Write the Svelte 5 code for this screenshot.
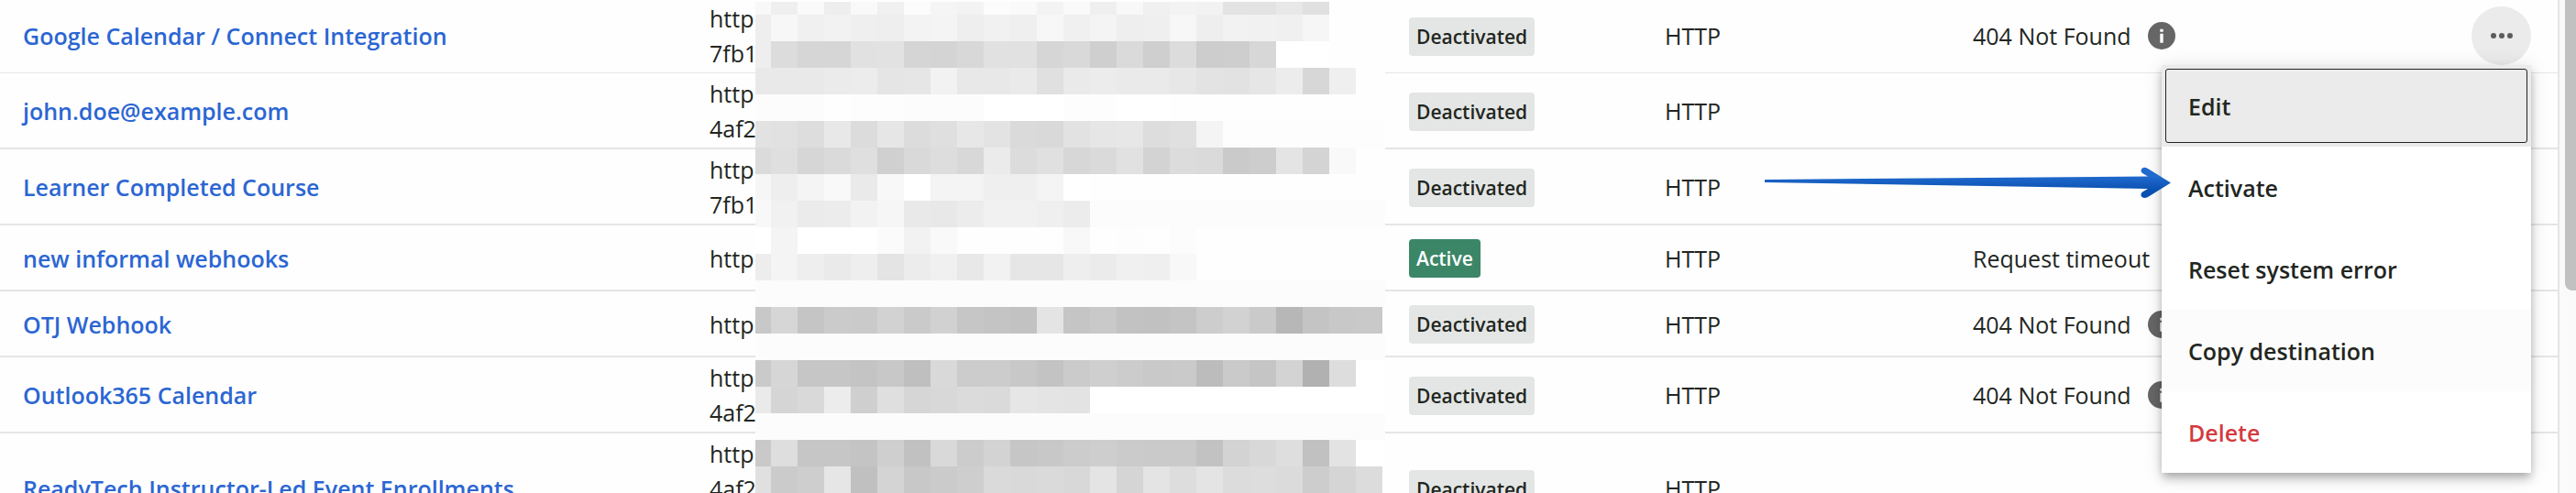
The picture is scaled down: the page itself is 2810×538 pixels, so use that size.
<script lang="ts">
  type Webhook = {
    name: string;
    url: string[];
    active?: boolean;
    error?: string;
    info?: boolean;
    menu?: boolean;
  };

  const webhooks: Webhook[] = [
    { name: 'Google Calendar / Connect Integration', url: ['http', '7fb1'], error: '404 Not Found', info: true, menu: true },
    { name: 'john.doe@example.com', url: ['http', '4af2'] },
    { name: 'Learner Completed Course', url: ['http', '7fb1'] },
    { name: 'new informal webhooks', url: ['http'], active: true, error: 'Request timeout' },
    { name: 'OTJ Webhook', url: ['http'], error: '404 Not Found', info: true },
    { name: 'Outlook365 Calendar', url: ['http', '4af2'], error: '404 Not Found', info: true },
    { name: 'ReadyTech Instructor-Led Event Enrollments', url: ['http', '4af2', ''] }
  ];

  const actions = ['Edit', 'Activate', 'Reset system error', 'Copy destination', 'Delete'];

  // grey level of every tile that hides the destinations
  const mosaic = [
    'f8 ef fa ee f9 f0 fc f5 f3 fc fa f3 fa ef f8 f0 f3 f2 e3 e3 e8 e0 fe fe fe',
    'ee f7 f0 f2 ef ee f3 f4 ee f1 ef f7 f0 f4 ee ef f7 ee f2 f1 f0 f6 fe fe fe',
    'ee dc d6 d6 e1 e2 d5 d4 d8 e1 e1 d6 d9 cf da cf dc cd ce d7 ff ff fe fe fe',
    'e9 e9 e9 eb ec e5 e6 f2 e8 e8 ea e0 ea ec ea ea e7 e3 e2 e6 ec d7 ef fe fe',
    'fc fc fc fe fd fd fc fc fc ff ff ff fd fd ff ff fe fe fe fe fe fe fe fe fe',
    'e2 e1 dd e8 dc e6 dc df e7 e3 da d9 e2 e6 e7 dd e0 f4 fd fd fd fd fd fd fd',
    'db df d6 da df d0 d9 dd d8 eb dc e0 d7 da e1 d3 dc da ca cd e4 d4 f9 fe fe',
    'f6 ee f4 f9 ea f8 ff f4 f4 ef ef f4 ff fe fe fe fe fe fe fe fe fe fe fe fe',
    'f8 f1 eb ec f2 f6 e9 e8 ec f1 f1 ef ec fc fc fc fc fc fc fc fc fc fc fc fc',
    'ff f4 ff ff ff fb f2 f9 fe fe fe fe f8 fe fd fe fc fe fe fe fe fe fe fe fe',
    'ed f4 ee ea ee e4 ec f0 e8 f2 e6 e6 ee eb f0 ef f8 fe fe fe fe fe fe fe fe',
    'fc fc fc fc fc fc fc fc fc fc fc fc fc fc fc fc fc fc fc fc fc fc fc fc fc',
    'c8 d6 c5 cb ca d2 ca d1 c6 c4 c2 e4 c5 c9 c2 c1 c4 cd d2 ca b7 c4 c8 c9 ff',
    'fc fc fc fc fc fc fc fc fc fc fc fc fc fc fc fc fc fc fc fc fc fc fc fc fc',
    'ca d6 c6 c6 c4 c8 bf d9 cc cc c8 c3 cb cf cc c9 ca bc ca c5 d3 b1 dd ff ff',
    'ea d5 d9 ec cf df d6 d8 db da e6 e4 e3 ff ff ff ff ff ff ff ff ff ff ff ff',
    'fc fc fc fc fc fc fc fc fc fc fc fc fc fc fc fc fc fc fc fc fc fc fc fc fc',
    'c9 de c6 c6 c4 cf c1 d9 cc d3 c6 c8 cc ce cb ca ca c2 d3 d8 de c1 e3 ff ff',
    'e0 cb ce e6 c0 d4 c8 cb ce da d9 da d8 e4 d5 e4 dd e4 dc dd db cd d5 dc ff'
  ].map((row) => row.split(' '));
</script>

<div class="page">
  <div class="list">
    <table>
      <colgroup>
        <col class="col-name" />
        <col class="col-url" />
        <col class="col-status" />
        <col class="col-type" />
        <col />
        <col class="col-actions" />
      </colgroup>
      <tbody>
        {#each webhooks as hook}
          <tr>
            <td><a href="#edit">{hook.name}</a></td>
            <td>
              {#each hook.url as line}
                <span class="url-line">{line}</span>
              {/each}
            </td>
            <td>
              <span class="badge" class:active={hook.active}>{hook.active ? 'Active' : 'Deactivated'}</span>
            </td>
            <td>HTTP</td>
            <td>
              {#if hook.error}
                <div class="error">
                  <span>{hook.error}</span>
                  {#if hook.info}
                    <svg class="info" viewBox="0 0 30 30" aria-hidden="true">
                      <circle cx="15" cy="15" r="15" fill="#666" />
                      <path d="M13.3 7.8h3.4v3h-3.4zM13.3 12.7h3.4v10h-3.4z" fill="#fff" />
                    </svg>
                  {/if}
                </div>
              {/if}
            </td>
            <td class="actions">
              {#if hook.menu}
                <div class="dropdown">
                  <button class="more" aria-label="More actions">
                    <svg viewBox="0 0 24 6" aria-hidden="true">
                      <circle cx="3" cy="3" r="3" />
                      <circle cx="12" cy="3" r="3" />
                      <circle cx="21" cy="3" r="3" />
                    </svg>
                  </button>
                  <div class="menu">
                    {#each actions as action, i}
                      <button
                        class="item"
                        class:focused={i === 0}
                        class:hovered={i === 3}
                        class:danger={action === 'Delete'}>{action}</button>
                    {/each}
                    <svg class="arrow" viewBox="0 0 444 36" aria-hidden="true">
                      <defs>
                        <linearGradient id="arrow-fill" x1="0" y1="0" x2="0" y2="1">
                          <stop offset="0.3" stop-color="#2069cd" />
                          <stop offset="0.75" stop-color="#0a50b0" />
                        </linearGradient>
                      </defs>
                      <path
                        d="M0 14 L418 10.500 L412 7 Q409 4 412 1.500 Q414 0 418 2 L443 17.500 L418 33 Q414 35 411.500 33 Q409 30 412 27.500 L418 24 L0 17 Z"
                        fill="url(#arrow-fill)"
                      />
                    </svg>
                  </div>
                </div>
              {/if}
            </td>
          </tr>
        {/each}
      </tbody>
    </table>

    <svg class="mosaic" viewBox="0 0 687 536" shape-rendering="crispEdges" aria-hidden="true">
      {#each mosaic as row, r}
        {#each row as v, c}
          <rect x={c * 29 - 12} y={r * 29 - 15} width="29" height="29" fill="#{v}{v}{v}" />
        {/each}
      {/each}
    </svg>
  </div>
  <div class="scrollbar">
    <div class="thumb"></div>
  </div>
</div>

<style>
  :global(body) {
    background: #fefefe;
  }

  .page {
    display: flex;
    height: 100vh;
    overflow: hidden;
    font-family: 'Open Sans', sans-serif;
    font-size: 25px;
    line-height: 38px;
    color: #222621;
  }

  .list {
    position: relative;
    flex: 1;
    border-right: 2px solid #e5e5e5;
  }

  table {
    width: 100%;
    margin-top: -3px;
    table-layout: fixed;
    border-spacing: 0;
  }

  .col-name {
    width: 749px;
  }

  .col-url {
    width: 763px;
  }

  .col-status {
    width: 279px;
  }

  .col-type {
    width: 336px;
  }

  .col-actions {
    width: 120px;
  }

  td {
    box-sizing: border-box;
    height: 72px;
    padding: 3px 25px 2px;
    border-bottom: 2px solid #e5e5e5;
    vertical-align: middle;
  }

  tr:first-child td {
    padding-top: 4px;
    border-bottom-width: 1px;
  }

  a {
    color: #2b66d3;
    font-weight: 600;
    text-decoration: none;
  }

  .url-line {
    display: block;
    height: 38px;
  }

  .badge {
    display: inline-block;
    padding: 0 8px;
    border-radius: 4px;
    background: #e4e6e5;
    font-size: 21px;
    font-weight: 600;
    line-height: 42px;
    vertical-align: middle;
  }

  .badge.active {
    background: #3b8667;
    color: #fff;
  }

  .error {
    display: flex;
    align-items: center;
    gap: 18px;
  }

  .info {
    width: 30px;
    height: 30px;
  }

  tr:first-child td.actions {
    padding: 4px 29px 2px 0;
  }

  .dropdown {
    position: relative;
    width: 65px;
    margin-left: auto;
  }

  .more {
    display: flex;
    align-items: center;
    justify-content: center;
    width: 65px;
    height: 64px;
    padding: 0;
    border: 0;
    border-radius: 50%;
    background: #ebebeb;
  }

  .more svg {
    width: 24px;
    height: 6px;
    fill: #5c5c5c;
  }

  .menu {
    position: absolute;
    top: 100%;
    right: 0;
    z-index: 2;
    width: 403px;
    background: #fff;
    box-shadow:
      0 4px 8px -2px rgba(0, 0, 0, 0.2),
      0 8px 10px rgba(0, 0, 0, 0.14),
      0 2px 20px rgba(0, 0, 0, 0.12);
  }

  .item {
    display: block;
    width: 100%;
    height: 89px;
    padding: 0 29px;
    border: 0;
    background: none;
    color: inherit;
    font: inherit;
    font-weight: 600;
    text-align: left;
  }

  .item.focused {
    position: relative;
    background: #ebebeb;
  }

  .item.focused::after {
    content: '';
    position: absolute;
    inset: 4px;
    border: 1px solid #222;
    border-radius: 3px;
  }

  .item.hovered {
    background: #fcfcfc;
  }

  .item.danger {
    color: #d43a3f;
  }

  .arrow {
    position: absolute;
    top: 111px;
    right: 392px;
    width: 444px;
    height: 36px;
  }

  .mosaic {
    position: absolute;
    top: 2px;
    left: 824px;
    width: 687px;
    height: 536px;
  }

  .scrollbar {
    width: 18px;
    padding-left: 6px;
    box-sizing: border-box;
    background: #fafafa;
  }

  .thumb {
    height: 59%;
    border-radius: 0 0 0 8px;
    background: #c1c1c1;
  }
</style>
